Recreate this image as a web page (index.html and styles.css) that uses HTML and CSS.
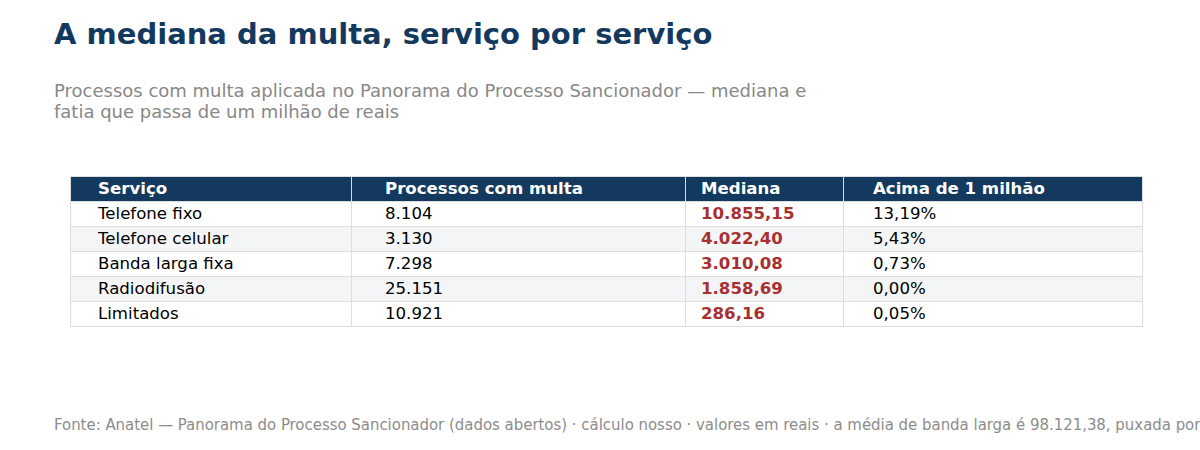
FILE: index.html
```html
<!DOCTYPE html>
<html lang="pt">
<head>
<meta charset="utf-8">
<link rel="stylesheet" href="styles.css">
</head>
<body>
<div class="page">
  <h1 class="title">A mediana da multa, serviço por serviço</h1>
  <p class="subtitle">Processos com multa aplicada no Panorama do Processo Sancionador — mediana e<br>fatia que passa de um milhão de reais</p>
  <table class="data">
    <thead>
      <tr><th class="c1">Serviço</th><th class="c2">Processos com multa</th><th class="c3">Mediana</th><th class="c4">Acima de 1 milhão</th></tr>
    </thead>
    <tbody>
      <tr><td class="c1">Telefone fixo</td><td class="c2">8.104</td><td class="c3 med">10.855,15</td><td class="c4">13,19%</td></tr>
      <tr><td class="c1">Telefone celular</td><td class="c2">3.130</td><td class="c3 med">4.022,40</td><td class="c4">5,43%</td></tr>
      <tr><td class="c1">Banda larga fixa</td><td class="c2">7.298</td><td class="c3 med">3.010,08</td><td class="c4">0,73%</td></tr>
      <tr><td class="c1">Radiodifusão</td><td class="c2">25.151</td><td class="c3 med">1.858,69</td><td class="c4">0,00%</td></tr>
      <tr><td class="c1">Limitados</td><td class="c2">10.921</td><td class="c3 med">286,16</td><td class="c4">0,05%</td></tr>
    </tbody>
  </table>
  <p class="source">Fonte: Anatel — Panorama do Processo Sancionador (dados abertos) · cálculo nosso · valores em reais · a média de banda larga é 98.121,38, puxada por poucos casos muito altos</p>
</div>
</body>
</html>
```
FILE: styles.css
```css
html, body {
  margin: 0;
  padding: 0;
  background: #ffffff;
  overflow: hidden;
}
.page {
  width: 1200px;
  height: 450px;
  padding: 0 0 0 54px;
  box-sizing: border-box;
  font-family: "DejaVu Sans", sans-serif;
  overflow: hidden;
}
.title {
  margin: 0;
  padding-top: 16px;
  font-size: 29px;
  line-height: 36px;
  font-weight: bold;
  color: #133a5e;
}
.subtitle {
  margin: 28px 0 0 0;
  font-size: 18px;
  line-height: 21px;
  color: #888888;
}
.data {
  margin: 54px 0 0 16px;
  width: 1073px;
  border-collapse: collapse;
  font-size: 16.6px;
}
.data th, .data td {
  height: 24px;
  padding: 0;
  text-align: left;
  border: 1px solid #dddddd;
  line-height: 20px;
}
.data th {
  background: #133a5e;
  color: #ffffff;
  font-weight: bold;
  border-color: #dddddd;
}
.data td { color: #000000; }
.data tbody tr:nth-child(even) td { background: #f4f5f7; }
.c1 { width: 253px; padding-left: 27px !important; }
.c2 { width: 300px; padding-left: 33px !important; }
.c3 { width: 142px; padding-left: 15px !important; }
.c4 { padding-left: 29px !important; }
.med { color: #a8302f !important; font-weight: bold; }
.source {
  margin: 88px 0 0 0;
  font-family: "DejaVu Sans Condensed", "DejaVu Sans", sans-serif;
  font-size: 16.6px;
  line-height: 20px;
  color: #8c8c8c;
  white-space: nowrap;
}
```
